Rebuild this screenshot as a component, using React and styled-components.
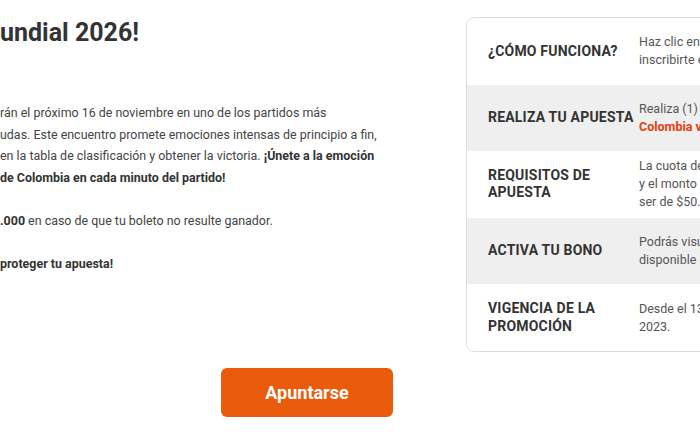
import React from "react";
import styled, { createGlobalStyle } from "styled-components";

const Global = createGlobalStyle`
  html, body {
    margin: 0;
    padding: 0;
    overflow: hidden;
    background: #ffffff;
    font-family: Roboto, "Liberation Sans", Arial, sans-serif;
  }
`;

const Page = styled.div`
  width: 1226px;
  margin-left: -306px;
  padding-top: 17px;
  display: flex;
  flex-direction: column;
`;

const Columns = styled.div`
  display: flex;
  gap: 76px;
  align-items: flex-start;
`;

const Intro = styled.section`
  flex: 1;
  min-width: 0;
  color: #444;
`;

const Title = styled.h1`
  margin: 0 0 54px;
  font-size: 25px;
  line-height: 31px;
  font-weight: 700;
  color: #333;
  white-space: nowrap;
`;

const Paragraph = styled.p`
  margin: 0 0 21.5px;
  font-size: 12.45px;
  line-height: 21.5px;
`;

const Line = styled.span`
  display: block;
  white-space: nowrap;
`;

const Offscreen = styled.span`
  display: inline-block;
  width: 306px;
  overflow: hidden;
  text-align: right;
  white-space: nowrap;
  vertical-align: top;
`;

const Strong = styled.b`
  font-weight: 700;
  color: #333;
`;

const Table = styled.div`
  flex: 0 0 454px;
  border: 1px solid #dcdcdc;
  border-radius: 8px;
  overflow: hidden;
  box-sizing: border-box;
`;

const Row = styled.div`
  display: grid;
  grid-template-columns: 172px 1fr;
  align-items: center;
  height: 66.6px;
  background: ${(p) => (p.$shaded ? "#efefef" : "#ffffff")};
`;

const Label = styled.div`
  padding: 0 2px 0 21px;
  font-size: 14px;
  font-weight: 700;
  line-height: 17.5px;
  letter-spacing: 0.2px;
  text-transform: uppercase;
  color: #333;
`;

const Value = styled.div`
  padding-right: 20px;
  font-size: 12.5px;
  line-height: 18px;
  color: #555;
  white-space: nowrap;
`;

const Accent = styled.b`
  font-weight: 700;
  color: #e8400e;
`;

const Actions = styled.div`
  display: flex;
  justify-content: center;
  margin-top: 16px;
`;

const Button = styled.button`
  width: 172px;
  height: 49px;
  border: none;
  border-radius: 6px;
  background: #ea5b0c;
  color: #ffffff;
  font-family: Roboto, "Liberation Sans", Arial, sans-serif;
  font-size: 18px;
  font-weight: 700;
  cursor: pointer;
`;

const rows = [
  {
    label: "¿Cómo funciona?",
    value: (
      <>
        Haz clic en el botón “Apuntarse” para
        <br />
        inscribirte en la promoción.
      </>
    ),
  },
  {
    label: "Realiza tu apuesta",
    value: (
      <>
        Realiza (1) apuesta sencilla al partido
        <br />
        <Accent>Colombia vs Brasil.</Accent>
      </>
    ),
  },
  {
    label: "Requisitos de apuesta",
    value: (
      <>
        La cuota de tu apuesta debe ser mínimo 1.50
        <br />
        y el monto mínimo de la apuesta debe
        <br />
        ser de $50.000.
      </>
    ),
  },
  {
    label: "Activa tu bono",
    value: (
      <>
        Podrás visualizar tu bono en la sección
        <br />
        disponible de tu cuenta.
      </>
    ),
  },
  {
    label: "Vigencia de la promoción",
    value: (
      <>
        Desde el 13 hasta el 16 de noviembre de
        <br />
        2023.
      </>
    ),
  },
];

export default function App() {
  return (
    <>
      <Global />
      <Page>
        <Columns>
          <Intro>
            <Title>
              <Offscreen>¡Protege tu apuesta en el M</Offscreen>undial 2026!
            </Title>
            <Paragraph>
              <Line>
                <Offscreen>Colombia y Brasil se enfrenta</Offscreen>rán el próximo 16 de noviembre en uno de los partidos más
              </Line>
              <Line>
                <Offscreen>esperados de las eliminatorias más pic</Offscreen>udas. Este encuentro promete emociones intensas de principio a fin,
              </Line>
              <Line>
                <Offscreen>con ambos equipos luchando por escalar </Offscreen>en la tabla de clasificación y obtener la victoria.{" "}
                <Strong>¡Únete a la emoción</Strong>
              </Line>
              <Line>
                <Offscreen>
                  <Strong>y apoya a la Selección </Strong>
                </Offscreen>
                <Strong>de Colombia en cada minuto del partido!</Strong>
              </Line>
            </Paragraph>
            <Paragraph>
              <Line>
                <Offscreen>
                  Te devolvemos hasta <Strong>$50</Strong>
                </Offscreen>
                <Strong>.000</Strong> en caso de que tu boleto no resulte ganador.
              </Line>
            </Paragraph>
            <Paragraph>
              <Line>
                <Offscreen>
                  <Strong>¡Apúntate ahora para </Strong>
                </Offscreen>
                <Strong>proteger tu apuesta!</Strong>
              </Line>
            </Paragraph>
          </Intro>
          <Table>
            {rows.map((r, i) => (
              <Row key={r.label} $shaded={i % 2 === 1}>
                <Label>{r.label}</Label>
                <Value>{r.value}</Value>
              </Row>
            ))}
          </Table>
        </Columns>
        <Actions>
          <Button type="button">Apuntarse</Button>
        </Actions>
      </Page>
    </>
  );
}
